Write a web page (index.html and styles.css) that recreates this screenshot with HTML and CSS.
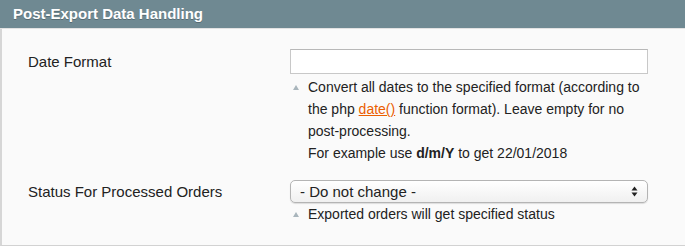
FILE: index.html
```html
<!DOCTYPE html>
<html lang="en">
<head>
  <meta charset="UTF-8" />
  <title>Post-Export Data Handling</title>
  <link rel="stylesheet" href="styles.css">
</head>
<body>
  <div class="section">
    <div class="section-head">Post-Export Data Handling</div>
    <div class="section-body">
      <div class="row">
        <label class="row-label" for="dateFormat">Date Format</label>
        <div class="row-value">
          <input type="text" id="dateFormat" class="input-text" />
          <p class="note">Convert all dates to the specified format (according to the php <a href="#">date()</a> function format). Leave empty for no post-processing.<br>For example use <strong>d/m/Y</strong> to get 22/01/2018</p>
        </div>
      </div>
      <div class="row">
        <label class="row-label select-label" for="orderStatus">Status For Processed Orders</label>
        <div class="row-value">
          <div class="select" id="orderStatus">
            <span>- Do not change -</span>
            <svg class="select-arrows" width="7" height="11" viewBox="0 0 7 11"><path d="M3.5 0.5 L6.5 4.5 L0.5 4.5 Z M0.5 6.5 L6.5 6.5 L3.5 10.5 Z" fill="#222"/></svg>
          </div>
          <p class="note note-tight">Exported orders will get specified status</p>
        </div>
      </div>
    </div>
  </div>
</body>
</html>
```

FILE: styles.css
```css
body {
  margin: 0;
  font-family: "Liberation Sans", Arial, Helvetica, sans-serif;
  font-size: 14px;
  color: #222;
  background: #fff;
}
.section {
  width: 687px;
}
.section-head {
  height: 29px;
  line-height: 27px;
  padding-left: 13px;
  background: #6f8992;
  color: #fff;
  font-weight: bold;
  font-size: 15px;
  text-shadow: 0 1px 0 #566b73;
  border-bottom: 1px solid #e2e2e2;
  box-sizing: border-box;
}
.section-body {
  background: #fafafa;
  border-left: 2px solid #d6d6d6;
  border-bottom: 1px solid #d2d2d2;
  padding: 20px 0 0 26px;
  height: 217px;
  box-sizing: border-box;
}
.row {
  display: flex;
  margin-bottom: 16px;
}
.row-label {
  width: 262px;
  font-size: 15px;
  line-height: 25px;
}
.select-label {
  line-height: 23px;
}
.row-value {
  width: 358px;
}
.input-text {
  display: block;
  width: 358px;
  height: 25px;
  margin: 0;
  border: 1px solid #c8c8c8;
  border-top-color: #b8b8b8;
  background: #fff;
  box-sizing: border-box;
}
.note {
  margin: 2px 0 0;
  padding-left: 18px;
  line-height: 22px;
  position: relative;
}
.note-tight {
  margin-top: 0;
}
.note::before {
  content: "";
  position: absolute;
  left: 3px;
  top: 9px;
  border-left: 3px solid transparent;
  border-right: 3px solid transparent;
  border-bottom: 5px solid #a9b5bc;
}
.note a {
  color: #eb5e00;
  text-decoration: underline;
}
.note strong {
  font-weight: bold;
}
.select {
  display: flex;
  align-items: center;
  justify-content: space-between;
  height: 23px;
  padding: 0 9px 0 9px;
  font-size: 15px;
  border: 1px solid #b4b4b4;
  border-radius: 5px;
  background: linear-gradient(#ffffff, #f0f0f0);
  box-shadow: 0 1px 1px rgba(0, 0, 0, 0.12);
  box-sizing: border-box;
}
```
